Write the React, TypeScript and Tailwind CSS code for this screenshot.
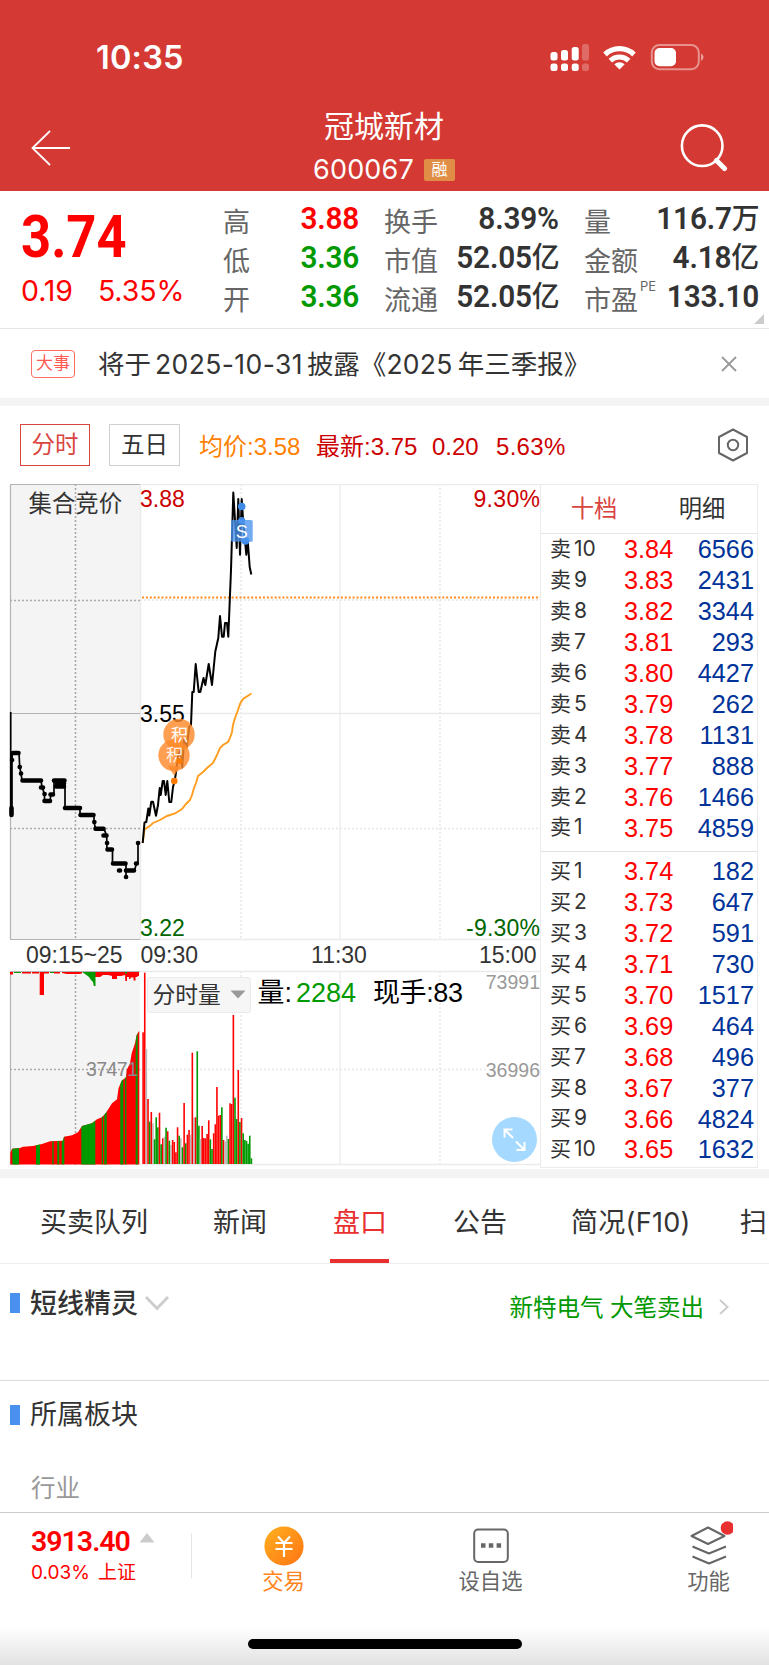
import React from 'react';

interface Level {
  label: string;
  price: string;
  qty: string;
}

const asks: Level[] = [
  { label: '卖10', price: '3.84', qty: '6566' },
  { label: '卖9', price: '3.83', qty: '2431' },
  { label: '卖8', price: '3.82', qty: '3344' },
  { label: '卖7', price: '3.81', qty: '293' },
  { label: '卖6', price: '3.80', qty: '4427' },
  { label: '卖5', price: '3.79', qty: '262' },
  { label: '卖4', price: '3.78', qty: '1131' },
  { label: '卖3', price: '3.77', qty: '888' },
  { label: '卖2', price: '3.76', qty: '1466' },
  { label: '卖1', price: '3.75', qty: '4859' },
];

const bids: Level[] = [
  { label: '买1', price: '3.74', qty: '182' },
  { label: '买2', price: '3.73', qty: '647' },
  { label: '买3', price: '3.72', qty: '591' },
  { label: '买4', price: '3.71', qty: '730' },
  { label: '买5', price: '3.70', qty: '1517' },
  { label: '买6', price: '3.69', qty: '464' },
  { label: '买7', price: '3.68', qty: '496' },
  { label: '买8', price: '3.67', qty: '377' },
  { label: '买9', price: '3.66', qty: '4824' },
  { label: '买10', price: '3.65', qty: '1632' },
];

const RED = '#ff0000';
const GREEN = '#009900';
const GRAY = '#bbbbbb';
const barColors: Record<string, string> = { r: RED, g: GREEN, n: GRAY };

// per-minute volume: height in px and direction (r = up, g = down, n = flat)
const volumes: [number, string][] = [
  [131.7, 'r'], [191.3, 'r'], [115, 'n'], [65, 'r'], [42.3, 'g'], [52, 'r'], [40.7, 'n'], [24.7, 'g'],
  [46.7, 'g'], [36.7, 'g'], [51.3, 'r'], [19.7, 'g'], [25.7, 'r'], [27.3, 'n'], [36.3, 'g'], [32.7, 'r'],
  [23.3, 'g'], [19, 'n'], [24, 'r'], [22, 'r'], [11.7, 'r'], [36.7, 'r'], [28.3, 'g'], [25.7, 'n'],
  [16.7, 'g'], [61, 'r'], [20.7, 'g'], [29.3, 'r'], [34, 'r'], [29.3, 'n'], [111.3, 'r'], [46.3, 'n'],
  [46.7, 'r'], [112.7, 'g'], [38.3, 'g'], [25, 'n'], [38, 'r'], [26, 'r'], [25.7, 'r'], [30, 'r'],
  [43.7, 'r'], [24.7, 'g'], [15, 'g'], [30.7, 'r'], [39.7, 'r'], [77, 'r'], [48.3, 'r'], [49, 'r'],
  [56.7, 'g'], [24, 'r'], [22.7, 'n'], [28.3, 'n'], [25, 'g'], [60.7, 'r'], [60, 'r'], [149, 'r'],
  [66.3, 'g'], [45, 'g'], [94, 'r'], [42, 'g'], [46, 'r'], [30.7, 'g'], [24, 'g'], [23, 'g'],
  [20.3, 'g'], [28.3, 'g'], [5.7, 'g'],
];

// down-tick stretches inside the auction volume area: [x, width]
const auctionGreen = [
  [12.3, 6.7], [36, 4], [52.3, 1.3], [57.3, 2], [61.7, 2.6], [81.3, 14], [101.7, 1.3], [104.3, 2.4],
  [120.3, 3], [125, 1.3], [135.7, 2],
];

const pricePath =
  '142.7,843 144.5,822.5 146.3,822 148.3,808.5 149.3,815.5 151.3,801.7 153,801.7 156,815.7 158,805 159.7,788 160.7,795 162.7,781 164,781 165.7,795 167.3,781 169.3,802 171.3,802 173,787 174.7,781 176.5,769 178.5,754 180,751 182.3,767.5 184,740 186.7,747 189.3,726.5 191,725 192.3,692 193.7,692 195.7,664 198.7,692 200.3,692 203.5,678 205.3,685 208.7,664 212,685 215.3,651.5 218.3,638 220,616 222,636.7 223.7,636.7 225,623 227,623 228.3,636.7 231,570 233.3,492.5 236.7,548 238.3,499 240,554.7 241.7,499 243.3,523 246.3,554.7 247.7,540.7 249.7,567 251.3,574.5';

const averagePath =
  '142.7,843 144.5,829.5 151,825 153,823 160,820 167,816 175,813.5 182,809 186,804 190,800 192,795 194,788 196,783 198,776 203,772 207,768 213,763 217,755 220,748 223,745 228,742 230,738 232,732 233,725 235,718 238,710 240,704 243,699 246,697 251.5,693.5';

const auctionLine =
  '10.7,712 10.7,815 12,808 12,760 12.3,752.5 19,752.5 19.7,767 21,773.5 22,780.5 41,780.5 42,787 44.5,794 44.5,801 50,801 51,794 54,794 54,780.5 65,780.5 65,808 80,808 80,815 94,815 94,822 95.5,828.7 104,828.7 106.7,836 107,849.5 112.5,849.5 112.5,863.5 126,863.5 126,877 126,870.5 134.5,870.5 136.5,863.5 138,863.5 138,843';

const auctionDots =
  'M11.5 808v7M12 760h.1M13 753h5.5M19.7 767h.1M21 773.5h.1M22.5 780.5h18.5M41 787.5h2M44.5 794h.1M44.5 801h5.5M50.5 794.5h2.5M54 780.5h10.5M56 786.5h8M57 783.500h7M65 808h15M80.500 815h13M94.300 822h.1M95.500 828.700h8M103.500 835.500h3M107 843h.1M107.500 849.500h4.500M113 863.500h12.500M119 870.500h1M126 870.500h8M126 877h.1M136 863.500h.800M138 843h.1';

function StatusIcons() {
  return (
    <svg width="156" height="30" viewBox="550 42 156 30" fill="none">
      <g fill="#fff">
        <rect x="551.5" y="52" width="7" height="8.500" rx="2.500" />
        <rect x="562" y="50" width="7" height="10.500" rx="2.500" />
        <rect x="572.700" y="47" width="7" height="13.500" rx="2.500" />
        <rect x="583" y="44" width="7" height="16.500" rx="2.500" opacity=".25" />
        <rect x="551.500" y="63.500" width="7" height="7.500" rx="2.500" />
        <rect x="562" y="63.500" width="7" height="7.500" rx="2.500" />
        <rect x="572.700" y="63.500" width="7" height="7.500" rx="2.500" />
        <rect x="583" y="63.500" width="7" height="7.500" rx="2.500" opacity=".25" />
        <path d="M620.500 69.500l-5.200-5.300a7.600 7.600 0 0 1 10.400 0z" />
      </g>
      <path d="M606 54.500a21 21 0 0 1 29 0" stroke="#fff" strokeWidth="5.200" />
      <path d="M611.300 60.600a13.500 13.500 0 0 1 18.400 0" stroke="#fff" strokeWidth="5" />
      <rect x="652.800" y="45" width="47" height="24.200" rx="7.500" stroke="#fff" strokeOpacity=".45" strokeWidth="2" />
      <rect x="655.500" y="48" width="21.500" height="18.200" rx="5" fill="#fff" />
      <path d="M702 53.500c3.300 1.300 3.300 6 0 7.300z" fill="#fff" fillOpacity=".5" />
    </svg>
  );
}

function Header() {
  return (
    <header className="h-[191px] bg-[#d43a33] text-white">
      <div className="flex h-[102px] items-start justify-between pl-[96px] pr-[64px]">
        <span className="mt-[38px] text-[32.500px] font-semibold leading-[39px] tracking-[0.200px]">10:35</span>
        <div className="mt-[42px]">
          <StatusIcons />
        </div>
      </div>
      <div className="flex h-[89px] justify-between pl-[30px] pr-[40px]">
        <svg className="mt-[27px]" width="42" height="38" viewBox="30 129 42 38" fill="none" stroke="#fff" strokeWidth="1.800">
          <path d="M50 131L32.500 148L50 165M32.500 148H70" />
        </svg>
        <div className="flex flex-col items-center pl-[17px]">
          <h1 className="mt-[5px] text-[30px] leading-[38px]">冠城新材</h1>
          <div className="mt-[9px] flex items-center gap-[10px]">
            <span className="text-[27px] leading-[32px] tracking-[0.200px]">600067</span>
            <span className="h-[22px] w-[31px] rounded-[2px] bg-[#e08e45] text-center text-[16px] leading-[21px]">融</span>
          </div>
        </div>
        <svg className="mt-[20px]" width="50" height="50" viewBox="680 122 50 50" fill="none" stroke="#fff">
          <circle cx="703.200" cy="145.700" r="20.300" strokeWidth="2.600" />
          <path d="M717.500 160.500l8 8" strokeWidth="5" strokeLinecap="round" />
        </svg>
      </div>
    </header>
  );
}

interface StatProps {
  label: string;
  value: string;
  unit?: string;
  sup?: string;
  color?: string;
}

function Stat({ label, value, unit, sup, color = 'text-[#333333]' }: StatProps) {
  return (
    <div className="flex h-[39px] items-center justify-between">
      <span className="relative mt-[8px] text-[27px] leading-[39px] text-[#666666]">
        {label}
        {sup && <sup className="absolute left-full top-[-3px] pl-[2px] text-[13px] leading-[16px]">{sup}</sup>}
      </span>
      <span className={`flex origin-right scale-x-[0.96] items-baseline font-['Roboto','Noto_Sans_CJK_SC',sans-serif] text-[31px] font-semibold leading-[39px] tracking-[-0.2px] ${color}`}>
        {value}
        {unit && <span className="text-[29px] font-medium leading-[30px]">{unit}</span>}
      </span>
    </div>
  );
}

function Quote() {
  return (
    <section className="relative flex h-[138px] border-b border-[#e6e6e6] bg-white">
      <div className="w-[223px] pl-[20px] text-[#ff0000]">
        <div className="ml-px mt-[12px] h-[67px] origin-left scale-x-[0.89] font-['Roboto',sans-serif] text-[59px] font-bold leading-[68px]">3.74</div>
        <div className="flex h-[42px] gap-[25px] pl-px text-[28.5px] leading-[42px] tracking-[-0.1px]">
          <span>0.19</span>
          <span>5.35%</span>
        </div>
      </div>
      <div className="mt-[8px] w-[136px]">
        <Stat label="高" value="3.88" color="text-[#ff0000]" />
        <Stat label="低" value="3.36" color="text-[#009900]" />
        <Stat label="开" value="3.36" color="text-[#009900]" />
      </div>
      <div className="ml-[25px] mt-[8px] w-[175px]">
        <Stat label="换手" value="8.39%" />
        <Stat label="市值" value="52.05" unit="亿" />
        <Stat label="流通" value="52.05" unit="亿" />
      </div>
      <div className="ml-[25px] mt-[8px] w-[175px]">
        <Stat label="量" value="116.7" unit="万" />
        <Stat label="金额" value="4.18" unit="亿" />
        <Stat label="市盈" value="133.10" sup="PE" />
      </div>
      <svg className="absolute bottom-[4px] right-[5px]" width="10" height="10" viewBox="0 0 10 10">
        <path d="M10 0V10H0z" fill="#cccccc" />
      </svg>
    </section>
  );
}

function Notice() {
  return (
    <section className="flex h-[69px] items-center bg-white pl-[31px] pr-[32px]">
      <span className="h-[28px] w-[44px] rounded-[4px] border border-[#ff6f66] text-center text-[17px] leading-[25px] text-[#ff5a50]">大事</span>
      <span className="ml-[23px] flex-1 whitespace-nowrap text-[26.500px] leading-[40px] text-[#333333]">
        将于<span className="ml-[4px] mr-[4px] tracking-[0.400px]">2025-10-31</span>披露《<span className="tracking-[0.300px]">2025</span>
        <span className="ml-[5px]">年三季报》</span>
      </span>
      <svg width="16" height="16" viewBox="0 0 16 16" stroke="#999999" strokeWidth="1.800">
        <path d="M1 1l14 14M15 1L1 15" />
      </svg>
    </section>
  );
}

function ChartToolbar() {
  return (
    <div className="flex h-[78px] items-center bg-white pl-[20px] pr-[20px] font-['Liberation_Sans','Noto_Sans_CJK_SC',sans-serif] text-[23.5px]">
      <button className="h-[42px] w-[70px] border border-[#d9463f] leading-[40px] text-[#d9463f]">分时</button>
      <button className="ml-[19px] h-[42px] w-[71px] border border-[#d0d0d0] leading-[40px] text-[#333333]">五日</button>
      <div className="ml-[19px] flex flex-1 whitespace-nowrap pt-[3px] text-[24px] text-[#cc0000]">
        <span className="w-[117px] text-[#ff8000]">均价:3.58</span>
        <span className="w-[116px]">最新:3.75</span>
        <span className="w-[64px]">0.20</span>
        <span className="tracking-[0.300px]">5.63%</span>
      </div>
      <svg width="34" height="34" viewBox="0 0 34 34" fill="none" stroke="#666666" strokeWidth="2">
        <path d="M18 1.500L32 9v16L18 32.500L4 25V9z" strokeLinejoin="round" />
        <circle cx="18" cy="17" r="5.200" />
      </svg>
    </div>
  );
}

function IntradayChart() {
  return (
    <svg
      width="540"
      height="685"
      viewBox="0 484 540 685"
      className="block shrink-0 font-['Liberation_Sans','Noto_Sans_CJK_SC',sans-serif]"
    >
      {/* price pane */}
      <rect x="10" y="484" width="130" height="456" fill="#f4f4f4" />
      <g fill="none" stroke="#ebebeb" strokeWidth="1.300">
        <path d="M140 484.500H540M140 713.500H540M140 939.500H540M340 484V940M140.500 484V940" />
        <path d="M140 971.500H540M340 971V1165M140 1164.500H540" />
        <path d="M241 484V940M440 484V940M140 600H540M140 828.500H540M241 971V1165M440 971V1165M140 1069.500H486" strokeDasharray="2 2" strokeWidth="1.800" />
      </g>
      <path d="M10.500 940V484.500H140M10.500 713.500H140M10.500 939.500H140" fill="none" stroke="#b3b3b3" strokeWidth="1.200" />
      <path d="M75.500 484V940M10 600.500H140M10 828.500H140" fill="none" stroke="#aaaaaa" strokeWidth="1.600" strokeDasharray="2 2" />
      <path d="M142 597.500H540" stroke="#ff8c1a" strokeWidth="2" strokeDasharray="2 1.900" />

      <text x="28.500" y="511.500" fontSize="23.400" fill="#333333">集合竞价</text>
      <g fontSize="23">
        <text x="140" y="506.500" fill="#cc0000">3.88</text>
        <text x="540" y="506.500" fill="#cc0000" textAnchor="end" textLength="66.500">9.30%</text>
        <text x="140" y="721.500" fill="#000000">3.55</text>
        <text x="140" y="935.500" fill="#006600">3.22</text>
        <text x="540" y="935.500" fill="#006600" textAnchor="end" textLength="74">-9.30%</text>
      </g>

      <polyline points={auctionLine} fill="none" stroke="#000" strokeWidth="1.700" />
      <path d={auctionDots} fill="none" stroke="#000" strokeWidth="4.600" strokeLinecap="round" />
      <polyline points={averagePath} fill="none" stroke="#ff9d1e" strokeWidth="1.900" />
      <polyline points={pricePath} fill="none" stroke="#000" strokeWidth="2" strokeLinejoin="round" />

      {/* trade markers */}
      <circle cx="179" cy="734.500" r="15.700" fill="#ff8a2b" fillOpacity=".82" />
      <path d="M168 766l5.500 8.500q.8 1 1.500 0l5.500-8.500z" fill="#ff8a2b" fillOpacity=".82" />
      <circle cx="174" cy="755.300" r="15.700" fill="#ff8a2b" fillOpacity=".82" />
      <circle cx="174.300" cy="781" r="3.300" fill="#ff7b00" />
      <text x="179.500" y="740.500" fontSize="17" fill="#fff" textAnchor="middle">积</text>
      <text x="174.500" y="761" fontSize="17" fill="#fff" fillOpacity=".9" textAnchor="middle">积</text>
      <circle cx="179.500" cy="761" r="3" fill="#ff7b00" />
      <g fill="#3f8ae6">
        <circle cx="241.700" cy="506.500" r="3.800" />
        <circle cx="241.700" cy="520.500" r="3.500" />
        <circle cx="245.500" cy="541" r="3.800" />
      </g>
      <rect x="231" y="520" width="21.700" height="21.700" rx="1.500" fill="#4a94ee" fillOpacity=".78" />
      <text x="241.800" y="537.500" fontSize="18" fill="#fff" textAnchor="middle">S</text>

      <g fontSize="23" fill="#333333">
        <text x="26" y="963">09:15~25</text>
        <text x="140.500" y="963">09:30</text>
        <text x="339" y="963" textAnchor="middle">11:30</text>
        <text x="536.500" y="963" textAnchor="end">15:00</text>
      </g>

      {/* volume pane */}
      <rect x="10" y="971" width="130" height="193.500" fill="#f4f4f4" />
      <path d="M10.500 1165V971.500H140" fill="none" stroke="#b3b3b3" strokeWidth="1.200" />
      <path d="M75.500 971V1165M10 1069.500H140" fill="none" stroke="#aaaaaa" strokeWidth="1.600" strokeDasharray="2 2" />
      <clipPath id="auction-volume">
        <path d="M10.300 1164.500V1153L12 1148.700L20 1148L23 1146.700L33 1146L42 1144L50 1141.300L63 1140.700L64 1136.700L72 1135.300L78 1132.300L82 1126L92 1123.300L97 1119.300L102 1117.300L106 1112.700L112 1103.300L117 1099.300L118.500 1088.300L121.700 1080.700L126 1077.300L126.700 1070L130 1063.300L131.700 1053.300L135 1043.300L136.700 1035L139.300 1030.700V1164.500z" />
      </clipPath>
      <g clipPath="url(#auction-volume)">
        <rect x="10" y="1030" width="130" height="135" fill={RED} />
        {auctionGreen.map(([x, w]) => (
          <rect key={x} x={x} y="1030" width={w} height="135" fill={GREEN} />
        ))}
      </g>
      <path
        d="M10 972h3v2.500h-3zM22 972h9v1.500h-9zM32 972h7v1.500h-7zM39.700 972h4.300v23h-4.300zM44 972h5v1.500h-5zM54 972h6v1.500h-6zM62 972h20v1.500l-3 .5h-12l-5-1zM95 972h30v3l-4 1h-4v3h-5v-3l-4-1h-5l-3 2h-5zM125 972h14v4h-1.500v1h-2v3.500h-2v-3h-3v1.500h-1.500v-2h-2v4h-1.700z"
        fill={RED}
      />
      <path d="M14 972h7v1h-7zM50 972h4v1h-4zM82 972h13.500v14h-1.700l-.8-4l-2-2l-2-3l-4-3zM125 972h2v1.500h-2z" fill={GREEN} />
      {volumes.map(([h, dir], i) => (
        <rect key={i} x={142.300 + i * 1.641} y={1164 - h} width="1.600" height={h} fill={barColors[dir]} />
      ))}
      <g fontSize="19.500" fill="#999999">
        <text x="86" y="1075.500" fill="#888888" textLength="52">37471</text>
        <text x="540" y="989" textAnchor="end">73991</text>
        <text x="540" y="1077" textAnchor="end">36996</text>
      </g>

      {/* indicator picker */}
      <rect x="147.500" y="977.500" width="103" height="35" rx="2" fill="#f6f6f6" stroke="#ebebeb" />
      <text x="152.500" y="1003" fontSize="22.800" fill="#333333">分时量</text>
      <path d="M230.500 990.500h15l-7.500 8z" fill="#999999" />
      <g fontSize="27">
        <text x="257.500" y="1002" fill="#000">量:</text>
        <text x="296" y="1002" fill={GREEN}>2284</text>
        <text x="373" y="1002" fill="#000" textLength="90">现手:83</text>
      </g>
      <circle cx="514.500" cy="1139.500" r="22.500" fill="#a5d9ff" />
      <path d="M504.500 1137.500V1129.500H512.500M504.500 1129.500L513 1138M516 1141.500L524.500 1150M524.500 1142V1150H516.500" fill="none" stroke="#fff" strokeWidth="2" />
    </svg>
  );
}

function LevelRow({ level }: { level: Level }) {
  const side = level.label.slice(0, 1);
  const depth = level.label.slice(1);
  return (
    <div className="flex h-[30.900px] items-center pl-[9px] pr-[3px] font-['Liberation_Sans','Noto_Sans_CJK_SC',sans-serif] text-[25.300px]">
      <span className="flex w-[74px] items-center gap-[3px] pb-[2px] font-['Inter','Noto_Sans_CJK_SC',sans-serif] text-[21px] leading-[28px] text-[#333333]">
        <span>{side === '卖' ? '卖' : '买'}</span>
        <span>{depth}</span>
      </span>
      <span className="text-[#ff0000]">{level.price}</span>
      <span className="flex-1 text-right text-[#003399]">{level.qty}</span>
    </div>
  );
}

function OrderBook() {
  return (
    <div className="h-[684px] w-[218px] border border-[#ebebeb] bg-white">
      <div className="flex h-[49px] items-center border-b border-[#e6e6e6] text-[23.300px] leading-[44px]">
        <span className="w-[106px] text-center text-[#d9463f]">十档</span>
        <span className="w-[110px] text-center text-[#333333]">明细</span>
      </div>
      <div className="border-b border-[#e0e0e0] pb-[7px] pt-px">
        {asks.map((level) => (
          <LevelRow key={level.label} level={level} />
        ))}
      </div>
      <div className="pt-[5px]">
        {bids.map((level) => (
          <LevelRow key={level.label} level={level} />
        ))}
      </div>
    </div>
  );
}

const tabs = [
  { name: '买卖队列', gap: 'ml-[40px]' },
  { name: '新闻', gap: 'ml-[65px]' },
  { name: '盘口', gap: 'ml-[66px]', active: true },
  { name: '公告', gap: 'ml-[66px]' },
  { name: '简况(F10)', gap: 'ml-[64px]' },
  { name: '扫', gap: 'ml-[49px]' },
];

function Tabs() {
  return (
    <nav className="flex h-[86px] overflow-hidden whitespace-nowrap border-b border-[#eeeeee] text-[27px] leading-[89px] text-[#333333]">
      {tabs.map((tab) => (
        <span key={tab.name} className={`relative h-[86px] shrink-0 ${tab.gap} ${tab.active ? 'text-[#e93030]' : ''}`}>
          {tab.name === '简况(F10)' ? <span className="tracking-[0.300px]">{tab.name}</span> : tab.name}
          {tab.active && <span className="absolute bottom-0 left-[-3px] h-[5px] w-[59px] bg-[#e93030]" />}
        </span>
      ))}
    </nav>
  );
}

function Details() {
  return (
    <>
      <section className="flex h-[117px] items-start border-b border-[#dcdcdc] pl-[10px] pr-[40px]">
        <span className="mt-[29px] h-[20px] w-[10px] bg-[#4a90ee]" />
        <h2 className="ml-[10px] mt-[20px] text-[27px] font-medium leading-[40px] text-[#333333]">短线精灵</h2>
        <svg className="ml-[7px] mt-[32px]" width="24" height="15" viewBox="0 0 24 15" fill="none" stroke="#cccccc" strokeWidth="2.800">
          <path d="M1 1l11 11.500L23 1" />
        </svg>
        <span className="ml-auto mt-[24px] text-[23.500px] leading-[40px] text-[#009900]">新特电气 大笔卖出</span>
        <svg className="ml-[15px] mt-[35px]" width="10" height="16" viewBox="0 0 10 16" fill="none" stroke="#cccccc" strokeWidth="2">
          <path d="M1 1l7.500 7L1 15" />
        </svg>
      </section>
      <section className="h-[131px] pl-[10px]">
        <div className="flex items-start">
          <span className="mt-[24px] h-[20px] w-[10px] bg-[#4a90ee]" />
          <h2 className="ml-[10px] mt-[14px] text-[27px] leading-[40px] text-[#333333]">所属板块</h2>
        </div>
        <p className="ml-[21px] mt-[33px] text-[24.500px] leading-[40px] text-[#999999]">行业</p>
      </section>
    </>
  );
}

function BottomBar() {
  return (
    <footer className="flex h-[153px] flex-col border-t border-[#cccccc] bg-gradient-to-b from-white from-[75%] to-[#e2e2e2]">
      <div className="flex h-[94px] text-[21.300px] text-[#666666]">
        <div className="mt-[20px] h-[45px] w-[192px] shrink-0 border-r border-[#e6e6e6] pl-[31px] text-[#ff0000]">
          <div className="mt-[-10px] flex h-[38px] items-center gap-[9px]">
            <span className="origin-left font-['Roboto',sans-serif] text-[28.500px] font-semibold leading-[34px] tracking-[-1px]">3913.40</span>
            <svg className="mb-[9px]" width="16" height="10" viewBox="0 0 16 10">
              <path d="M8 0l7.500 9.500H.5z" fill="#cccccc" />
            </svg>
          </div>
          <div className="mt-[-1px] flex h-[26px] items-center gap-[8px] text-[19px] leading-[26px]">
            <span>0.03%</span>
            <span>上证</span>
          </div>
        </div>
        <div className="flex w-[183px] shrink-0 flex-col items-center pt-[13px] text-[#ff8419]">
          <svg width="40" height="40" viewBox="0 0 40 40" fill="none">
            <defs>
              <linearGradient id="coin" x1="0" y1="0" x2="1" y2="1">
                <stop offset="0" stopColor="#ffb01f" />
                <stop offset="1" stopColor="#ff7414" />
              </linearGradient>
            </defs>
            <circle cx="20" cy="20" r="19.600" fill="url(#coin)" />
            <path d="M14 10.500L20 17l6-6.500M11.500 17H28.500M11.500 23H28.500M20 17V31" stroke="#fff" strokeWidth="2.200" />
          </svg>
          <span className="leading-[30px]">交易</span>
        </div>
        <div className="ml-[24px] flex w-[183px] shrink-0 flex-col items-center pt-[13px]">
          <svg width="40" height="40" viewBox="0 0 40 40" fill="none">
            <rect x="3.200" y="3.500" width="33.600" height="32.500" rx="4" stroke="#666666" strokeWidth="2" />
            <path d="M10 19.500h4.500M17.800 19.500h4.500M25.600 19.500h4.500" stroke="#666666" strokeWidth="4.500" />
          </svg>
          <span className="leading-[30px]">设自选</span>
        </div>
        <div className="ml-[35px] flex w-[160px] shrink-0 flex-col items-center pr-[0px] pt-[7px]">
          <svg className="ml-[24px]" width="48" height="46" viewBox="685 1520 48 46" fill="none" stroke="#666666" strokeWidth="2" strokeLinejoin="round">
            <path d="M708 1527.500L724.500 1536L708 1544L691.500 1536z" />
            <path d="M692.500 1546.500L709 1553.500L726 1546.500M692.500 1556.500L709 1563.500L726 1556.500" />
            <circle cx="727.500" cy="1528" r="6.800" fill="#e93030" stroke="none" />
          </svg>
          <span className="ml-[23px] leading-[30px]">功能</span>
        </div>
      </div>
      <div className="mx-auto mt-[32px] h-[10px] w-[274px] rounded-full bg-black" />
    </footer>
  );
}

export default function App() {
  return (
    <div className="h-[1665px] w-[769px] overflow-hidden bg-white font-['Inter','Noto_Sans_CJK_SC',sans-serif]">
      <Header />
      <Quote />
      <Notice />
      <div className="h-[8px] bg-[#f4f4f4]" />
      <ChartToolbar />
      <div className="flex h-[685px]">
        <IntradayChart />
        <OrderBook />
      </div>
      <div className="h-[9px] bg-[#f4f4f4]" />
      <Tabs />
      <Details />
      <BottomBar />
    </div>
  );
}
